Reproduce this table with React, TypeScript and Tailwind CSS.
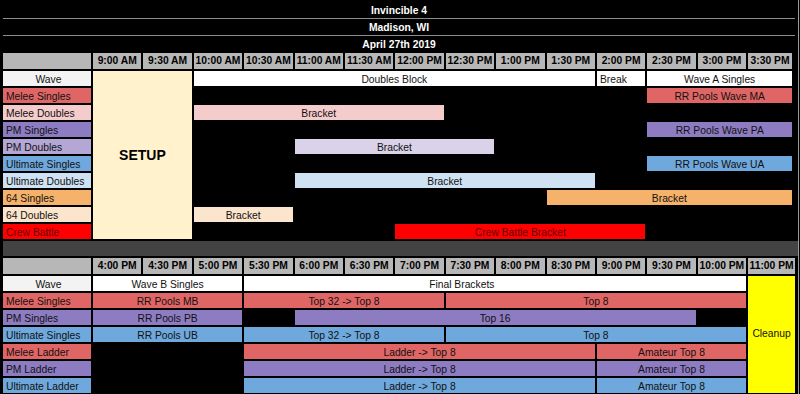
import React from 'react';

type Block = { text: string; cls: string };

const topTimes = ['9:00 AM', '9:30 AM', '10:00 AM', '10:30 AM', '11:00 AM', '11:30 AM', '12:00 PM', '12:30 PM', '1:00 PM', '1:30 PM', '2:00 PM', '2:30 PM', '3:00 PM', '3:30 PM'];
const bottomTimes = ['4:00 PM', '4:30 PM', '5:00 PM', '5:30 PM', '6:00 PM', '6:30 PM', '7:00 PM', '7:30 PM', '8:00 PM', '8:30 PM', '9:00 PM', '9:30 PM', '10:00 PM', '11:00 PM'];

const topLabels: Block[] = [
  { text: 'Wave', cls: 'row-start-2 bg-[#f3f3f3] justify-center' },
  { text: 'Melee Singles', cls: 'row-start-3 bg-[#e06666]' },
  { text: 'Melee Doubles', cls: 'row-start-4 bg-[#f4cccc]' },
  { text: 'PM Singles', cls: 'row-start-5 bg-[#8e7cc3]' },
  { text: 'PM Doubles', cls: 'row-start-6 bg-[#b4a7d6]' },
  { text: 'Ultimate Singles', cls: 'row-start-7 bg-[#6fa8dc]' },
  { text: 'Ultimate Doubles', cls: 'row-start-8 bg-[#cfe2f3]' },
  { text: '64 Singles', cls: 'row-start-9 bg-[#f6b26b]' },
  { text: '64 Doubles', cls: 'row-start-10 bg-[#fce5cd]' },
  { text: 'Crew Battle', cls: 'row-start-11 bg-[#ff0000] text-[#660000]' },
];

const topBlocks: Block[] = [
  { text: 'Doubles Block', cls: 'col-start-4 col-span-8 row-start-2 bg-white justify-center' },
  { text: 'Break', cls: 'col-start-12 row-start-2 bg-white pl-[3px]' },
  { text: 'Wave A Singles', cls: 'col-start-13 col-span-3 row-start-2 bg-white justify-center' },
  { text: 'RR Pools Wave MA', cls: 'col-start-13 col-span-3 row-start-3 bg-[#e06666] justify-center' },
  { text: 'Bracket', cls: 'col-start-4 col-span-5 row-start-4 bg-[#f4cccc] justify-center' },
  { text: 'RR Pools Wave PA', cls: 'col-start-13 col-span-3 row-start-5 bg-[#8e7cc3] justify-center' },
  { text: 'Bracket', cls: 'col-start-6 col-span-4 row-start-6 bg-[#d9d2e9] justify-center' },
  { text: 'RR Pools Wave UA', cls: 'col-start-13 col-span-3 row-start-7 bg-[#6fa8dc] justify-center' },
  { text: 'Bracket', cls: 'col-start-6 col-span-6 row-start-8 bg-[#cfe2f3] justify-center' },
  { text: 'Bracket', cls: 'col-start-11 col-span-5 row-start-9 bg-[#f6b26b] justify-center' },
  { text: 'Bracket', cls: 'col-start-4 col-span-2 row-start-10 bg-[#fce5cd] justify-center' },
  { text: 'Crew Battle Bracket', cls: 'col-start-8 col-span-5 row-start-11 bg-[#ff0000] text-[#660000] justify-center' },
];

const bottomLabels: Block[] = [
  { text: 'Wave', cls: 'row-start-2 bg-[#f3f3f3] justify-center' },
  { text: 'Melee Singles', cls: 'row-start-3 bg-[#e06666]' },
  { text: 'PM Singles', cls: 'row-start-4 bg-[#8e7cc3]' },
  { text: 'Ultimate Singles', cls: 'row-start-5 bg-[#6fa8dc]' },
  { text: 'Melee Ladder', cls: 'row-start-6 bg-[#e06666]' },
  { text: 'PM Ladder', cls: 'row-start-7 bg-[#8e7cc3]' },
  { text: 'Ultimate Ladder', cls: 'row-start-8 bg-[#6fa8dc]' },
];

const bottomBlocks: Block[] = [
  { text: 'Wave B Singles', cls: 'col-start-2 col-span-3 row-start-2 bg-white justify-center' },
  { text: 'Final Brackets', cls: 'col-start-5 col-span-10 row-start-2 bg-white pl-[185px]' },
  { text: 'RR Pools MB', cls: 'col-start-2 col-span-3 row-start-3 bg-[#e06666] justify-center' },
  { text: 'Top 32 -> Top 8', cls: 'col-start-5 col-span-4 row-start-3 bg-[#e06666] justify-center' },
  { text: 'Top 8', cls: 'col-start-9 col-span-6 row-start-3 bg-[#e06666] justify-center' },
  { text: 'RR Pools PB', cls: 'col-start-2 col-span-3 row-start-4 bg-[#8e7cc3] justify-center' },
  { text: 'Top 16', cls: 'col-start-6 col-span-8 row-start-4 bg-[#8e7cc3] justify-center' },
  { text: 'RR Pools UB', cls: 'col-start-2 col-span-3 row-start-5 bg-[#6fa8dc] justify-center' },
  { text: 'Top 32 -> Top 8', cls: 'col-start-5 col-span-4 row-start-5 bg-[#6fa8dc] justify-center' },
  { text: 'Top 8', cls: 'col-start-9 col-span-6 row-start-5 bg-[#6fa8dc] justify-center' },
  { text: 'Ladder -> Top 8', cls: 'col-start-5 col-span-7 row-start-6 bg-[#e06666] justify-center' },
  { text: 'Amateur Top 8', cls: 'col-start-12 col-span-3 row-start-6 bg-[#e06666] justify-center' },
  { text: 'Ladder -> Top 8', cls: 'col-start-5 col-span-7 row-start-7 bg-[#8e7cc3] justify-center' },
  { text: 'Amateur Top 8', cls: 'col-start-12 col-span-3 row-start-7 bg-[#8e7cc3] justify-center' },
  { text: 'Ladder -> Top 8', cls: 'col-start-5 col-span-7 row-start-8 bg-[#6fa8dc] justify-center' },
  { text: 'Amateur Top 8', cls: 'col-start-12 col-span-3 row-start-8 bg-[#6fa8dc] justify-center' },
];

// sheet cells sit a touch below centre
const cell = 'flex items-center overflow-hidden whitespace-nowrap leading-none';
const dataCell = `${cell} pt-[3px]`;

function Header({ times }: { times: string[] }) {
  return (
    <>
      <div className="col-start-1 row-start-1 bg-[#b7b7b7]" />
      {times.map((t) => (
        <div key={t} className={`${cell} row-start-1 justify-center bg-[#b7b7b7] pt-px font-bold text-black`}>
          {t}
        </div>
      ))}
    </>
  );
}

function TitleBar({ text, h }: { text: string; h: string }) {
  return <div className={`${cell} ${h} justify-center pt-[2px] font-bold text-white`}>{text}</div>;
}

export default function App() {
  return (
    <div
      className="flex w-[800px] h-[394px] overflow-hidden bg-black text-[10.3px] text-[#111]"
      style={{ fontFamily: '"Liberation Sans", Arial, sans-serif' }}
    >
      <div className="flex flex-col w-[798px] pt-[3px]">
        {/* Title rows */}
        <div className="flex flex-col px-[3px]">
          <TitleBar text="Invincible 4" h="h-[15px]" />
          <div className="h-px bg-[#8c8c8c]" />
          <TitleBar text="Madison, WI" h="h-[16px]" />
          <div className="h-px bg-[#8c8c8c]" />
          <TitleBar text="April 27th 2019" h="h-[16px]" />
        </div>

        {/* Morning / afternoon */}
        <div className="mt-px pl-[3px] grid grid-cols-[88px_repeat(13,48.4px)_44px] grid-rows-[16px_repeat(10,15px)] gap-[2px]">
          <Header times={topTimes} />
          {topLabels.map((l) => (
            <div key={l.text} className={`${dataCell} col-start-1 pl-[3px] ${l.cls}`}>
              {l.text}
            </div>
          ))}
          <div className={`${cell} col-start-2 col-span-2 row-start-2 row-span-10 justify-center bg-[#fff2cc] text-[14px] font-bold text-black`}>
            SETUP
          </div>
          {topBlocks.map((b, i) => (
            <div key={i} className={`${dataCell} ${b.cls}`}>
              {b.text}
            </div>
          ))}
        </div>

        <div className="mt-[2px] ml-[3px] h-[15px] bg-[#434343]" />

        {/* Evening */}
        <div className="mt-[2px] pl-[3px] grid grid-cols-[88px_repeat(13,48.4px)_47px] grid-rows-[16px_repeat(7,15px)] gap-[2px]">
          <Header times={bottomTimes} />
          {bottomLabels.map((l) => (
            <div key={l.text} className={`${dataCell} col-start-1 pl-[3px] ${l.cls}`}>
              {l.text}
            </div>
          ))}
          <div className={`${cell} col-start-15 row-start-2 row-span-7 justify-center bg-[#ffff00]`}>Cleanup</div>
          {bottomBlocks.map((b, i) => (
            <div key={i} className={`${dataCell} ${b.cls}`}>
              {b.text}
            </div>
          ))}
        </div>
      </div>
      <div className="w-px bg-[#9a9a9a]" />
    </div>
  );
}
